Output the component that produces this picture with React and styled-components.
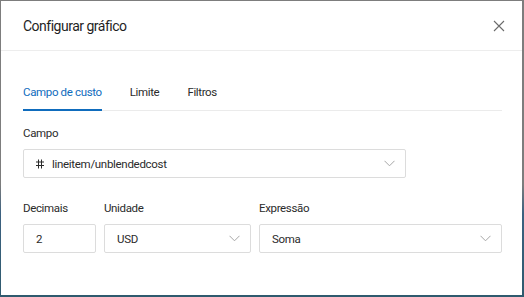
import React from 'react';
import styled, { createGlobalStyle } from 'styled-components';

const GlobalStyle = createGlobalStyle`
    html, body {
        margin: 0;
        padding: 0;
        width: 524px;
        height: 297px;
        overflow: hidden;
    }
    body {
        font-family: Roboto, "Open Sans", sans-serif;
        background: linear-gradient(180deg, #7d7d7d 0%, #7d7d7d 62%, #3c6180 72%, #2f5a6e 100%);
    }
`

const Frame = styled.div`
    width: 524px;
    height: 297px;
    box-sizing: border-box;
    padding: 1px 2px 2px 1px;
`

const Dialog = styled.div`
    width: 100%;
    height: 100%;
    background: #ffffff;
    display: flex;
    flex-direction: column;
    color: #2b2b2b;
`

const Header = styled.div`
    height: 49px;
    display: flex;
    align-items: center;
    justify-content: space-between;
    padding: 0 16px 0 22px;
    border-bottom: 1px solid #ededed;
`

const Title = styled.h1`
    margin: 0;
    font-size: 14px;
    font-weight: 400;
    color: #1f1f1f;
    letter-spacing: -0.5px;
`

const CloseButton = styled.button`
    border: none;
    background: none;
    padding: 0;
    width: 14px;
    height: 14px;
    display: flex;
    cursor: pointer;
`

const Body = styled.div`
    padding: 22px 20px 0 22px;
    display: flex;
    flex-direction: column;
`

const Tabs = styled.div`
    display: flex;
    gap: 28px;
    border-bottom: 1px solid #ebebeb;
`

const Tab = styled.div`
    font-size: 11.5px;
    letter-spacing: -0.35px;
    padding: 12px 0 10px;
    color: ${p => p.active ? '#0f6cbd' : '#2b2b2b'};
    border-bottom: 2px solid ${p => p.active ? '#0f6cbd' : 'transparent'};
    margin-bottom: -1px;
    cursor: pointer;
`

const Field = styled.div`
    display: flex;
    flex-direction: column;
    gap: 9px;
    width: ${p => p.width};
`

const Label = styled.label`
    font-size: 11.5px;
    letter-spacing: -0.35px;
    color: #2b2b2b;
    line-height: 14px;
`

const Box = styled.div`
    height: 29px;
    box-sizing: border-box;
    border: 1px solid #dcdcdc;
    border-radius: 2px;
    display: flex;
    align-items: center;
    padding: 0 10px 0 12px;
    font-size: 11.5px;
    letter-spacing: -0.3px;
    color: #2b2b2b;
    gap: 8px;
`

const Value = styled.span`
    flex: 1;
`

const Row = styled.div`
    display: flex;
    gap: 8px;
    margin-top: 23px;
`

const Chevron = () => (
    <svg width="11" height="7" viewBox="0 0 11 7">
        <path d="M0.5 0.8 L5.5 5.8 L10.5 0.8" fill="none" stroke="#a6a6a6" strokeWidth="1" />
    </svg>
)

const Hash = () => (
    <svg width="8" height="10" viewBox="0 0 8 10">
        <path d="M2.5 0.5 V9.5 M5.5 0.5 V9.5 M0 3 H8 M0 6.5 H8" fill="none" stroke="#2b2b2b" strokeWidth="1" />
    </svg>
)

const CloseIcon = () => (
    <svg width="14" height="14" viewBox="0 0 14 14">
        <path d="M2 2 L12 12 M12 2 L2 12" fill="none" stroke="#6b6b6b" strokeWidth="1.1" />
    </svg>
)

export default function App() {
    return (
        <Frame>
            <GlobalStyle />
            <Dialog>
                <Header>
                    <Title>Configurar gráfico</Title>
                    <CloseButton><CloseIcon /></CloseButton>
                </Header>
                <Body>
                    <Tabs>
                        <Tab active>Campo de custo</Tab>
                        <Tab>Limite</Tab>
                        <Tab>Filtros</Tab>
                    </Tabs>
                    <Field width="383px" style={{ marginTop: 15 }}>
                        <Label>Campo</Label>
                        <Box>
                            <Hash />
                            <Value>lineitem/unblendedcost</Value>
                            <Chevron />
                        </Box>
                    </Field>
                    <Row>
                        <Field width="73px">
                            <Label>Decimais</Label>
                            <Box><Value>2</Value></Box>
                        </Field>
                        <Field width="147px">
                            <Label>Unidade</Label>
                            <Box><Value>USD</Value><Chevron /></Box>
                        </Field>
                        <Field width="243px">
                            <Label>Expressão</Label>
                            <Box><Value>Soma</Value><Chevron /></Box>
                        </Field>
                    </Row>
                </Body>
            </Dialog>
        </Frame>
    );
}
